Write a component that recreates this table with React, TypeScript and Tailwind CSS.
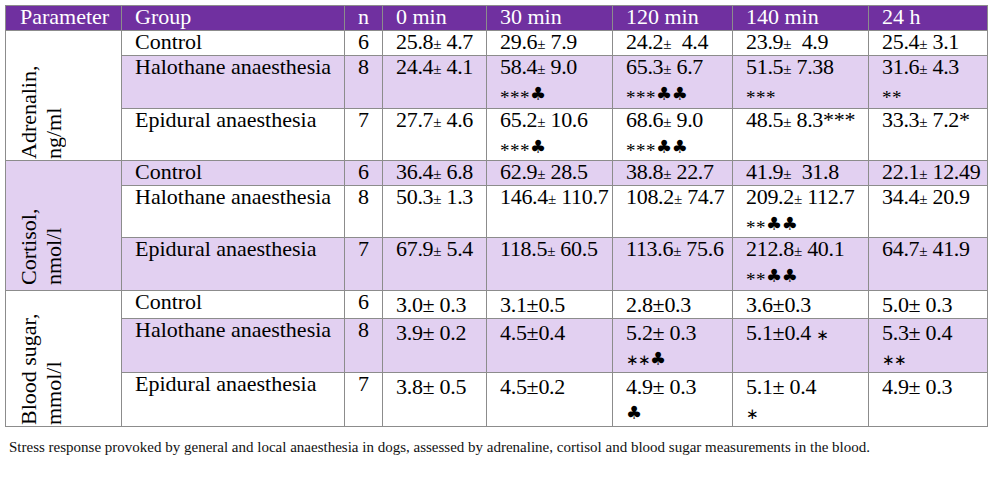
import React from "react";

type Row = {
  g: string;
  n: string;
  bg: string;
  h: string;
  cells: [string, string?][];
};

type Block = {
  l1: string;
  l2: string;
  bg: string;
  labelH: string;
  rows: Row[];
  blood?: boolean;
};

const W = "bg-white";
const L = "bg-[#e2d0f1]";

const blocks: Block[] = [
  {
    l1: "Adrenalin,",
    l2: "ng/ml",
    bg: W,
    labelH: "h-[128px]",
    rows: [
      {
        g: "Control",
        n: "6",
        bg: W,
        h: "h-[25px]",
        cells: [["25.8± 4.7"], ["29.6± 7.9"], ["24.2±  4.4"], ["23.9±  4.9"], ["25.4± 3.1"]],
      },
      {
        g: "Halothane anaesthesia",
        n: "8",
        bg: L,
        h: "h-[53px]",
        cells: [["24.4± 4.1"], ["58.4± 9.0", "***♣"], ["65.3± 6.7", "***♣♣"], ["51.5± 7.38", "***"], ["31.6± 4.3", "**"]],
      },
      {
        g: "Epidural anaesthesia",
        n: "7",
        bg: W,
        h: "h-[52px]",
        cells: [["27.7± 4.6"], ["65.2± 10.6", "***♣"], ["68.6± 9.0", "***♣♣"], ["48.5± 8.3###"], ["33.3± 7.2#"]],
      },
    ],
  },
  {
    l1: "Cortisol,",
    l2: "nmol/l",
    bg: L,
    labelH: "h-[124px]",
    rows: [
      {
        g: "Control",
        n: "6",
        bg: L,
        h: "h-[25px]",
        cells: [["36.4± 6.8"], ["62.9± 28.5"], ["38.8± 22.7"], ["41.9±  31.8"], ["22.1± 12.49"]],
      },
      {
        g: "Halothane anaesthesia",
        n: "8",
        bg: W,
        h: "h-[52px]",
        cells: [["50.3± 1.3"], ["146.4± 110.7"], ["108.2± 74.7"], ["209.2± 112.7", "**♣♣"], ["34.4± 20.9"]],
      },
      {
        g: "Epidural anaesthesia",
        n: "7",
        bg: L,
        h: "h-[53px]",
        cells: [["67.9± 5.4"], ["118.5± 60.5"], ["113.6± 75.6"], ["212.8± 40.1", "**♣♣"], ["64.7± 41.9"]],
      },
    ],
  },
  {
    l1: "Blood sugar,",
    l2: "mmol/l",
    bg: W,
    labelH: "h-[134px]",
    blood: true,
    rows: [
      {
        g: "Control",
        n: "6",
        bg: W,
        h: "h-[28px]",
        cells: [["3.0± 0.3"], ["3.1±0.5"], ["2.8±0.3"], ["3.6±0.3"], ["5.0± 0.3"]],
      },
      {
        g: "Halothane anaesthesia",
        n: "8",
        bg: L,
        h: "h-[54px]",
        cells: [["3.9± 0.2"], ["4.5±0.4"], ["5.2± 0.3", "**♣"], ["5.1±0.4 *"], ["5.3± 0.4", "**"]],
      },
      {
        g: "Epidural anaesthesia",
        n: "7",
        bg: W,
        h: "h-[54px]",
        cells: [["3.8± 0.5"], ["4.5±0.2"], ["4.9± 0.3", "♣"], ["5.1± 0.4", "*"], ["4.9± 0.3"]],
      },
    ],
  },
];

function Rich({ text, blood }: { text: string; blood?: boolean }) {
  const parts = text.split("");
  return (
    <>
      {parts.map((ch, i) => {
        if (ch === "±") {
          return blood ? (
            <span key={i}>±</span>
          ) : (
            <span key={i} className="text-[15px] leading-none">
              ±
            </span>
          );
        }
        if (ch === "♣") {
          return (
            <span key={i} className="[font-family:DejaVu_Sans,sans-serif] text-[18px] leading-none">
              ♣
            </span>
          );
        }
        if (ch === "*") {
          return blood ? (
            <span key={i} className="inline-block w-[12px] leading-none [font-family:DejaVu_Sans,sans-serif] text-[15px]">
              ∗
            </span>
          ) : (
            <span key={i} className="inline-block w-[10px] leading-none translate-y-[4px] text-[19px]">
              *
            </span>
          );
        }
        if (ch === "#") {
          return <span key={i}>*</span>;
        }
        return <React.Fragment key={i}>{ch}</React.Fragment>;
      })}
    </>
  );
}

const td = "border border-[#8c8c8c] align-top pl-[13px] pr-0 py-0 leading-[22px] whitespace-pre";
const SERIF = "[font-family:Liberation_Serif,Times_New_Roman,serif]";

export default function App() {
  return (
    <div className={`w-[993px] h-[477px] bg-white text-black overflow-hidden ${SERIF}`}>
      <div className="pl-[5px] pt-[5px]">
        <table className={`table-fixed border-collapse w-[982px] text-[22px] ${SERIF}`}>
          <colgroup>
            <col className="w-[116px]" />
            <col className="w-[223px]" />
            <col className="w-[38px]" />
            <col className="w-[104px]" />
            <col className="w-[126px]" />
            <col className="w-[120px]" />
            <col className="w-[136px]" />
            <col className="w-[119px]" />
          </colgroup>
          <thead>
            <tr className="h-[25px] bg-[#7030a0] text-white">
              {["Parameter", "Group", "n", "0 min", "30 min", "120 min", "140 min", "24 h"].map((h, i) => (
                <th key={h} className={`${td} font-normal text-left ${i === 0 ? "pl-[14px]" : ""}`}>
                  {h}
                </th>
              ))}
            </tr>
          </thead>
          <tbody>
            {blocks.map((b) =>
              b.rows.map((r, ri) => (
                <tr key={b.l1 + r.g} className={`${r.h} ${r.bg}`}>
                  {ri === 0 && (
                    <td rowSpan={3} className={`border border-[#8c8c8c] align-top p-0 pl-[10px] ${b.bg}`}>
                      <div
                        className={`${b.labelH} [writing-mode:vertical-rl] rotate-180 leading-[25px] whitespace-nowrap text-left`}
                      >
                        <div>{b.l1}</div>
                        <div>{b.l2}</div>
                      </div>
                    </td>
                  )}
                  <td className={td}>{r.g}</td>
                  <td className={td}>{r.n}</td>
                  {r.cells.map((c, ci) => (
                    <td key={ci} className={`${td} tracking-[-0.3px] ${b.blood ? "pt-[3px]" : ""}`}>
                      <div>
                        <Rich text={c[0]} blood={b.blood} />
                      </div>
                      {c[1] && (
                        <div className={b.blood ? "mt-[3px]" : "mt-[4px]"}>
                          <Rich text={c[1]} blood={b.blood} />
                        </div>
                      )}
                    </td>
                  ))}
                </tr>
              ))
            )}
          </tbody>
        </table>
        <p className={`mt-[10px] pl-[4px] text-[15px] leading-[20px] text-[#111111] ${SERIF}`}>
          Stress response provoked by general and local anaesthesia in dogs, assessed by adrenaline, cortisol and blood
          sugar measurements in the blood.
        </p>
      </div>
    </div>
  );
}
